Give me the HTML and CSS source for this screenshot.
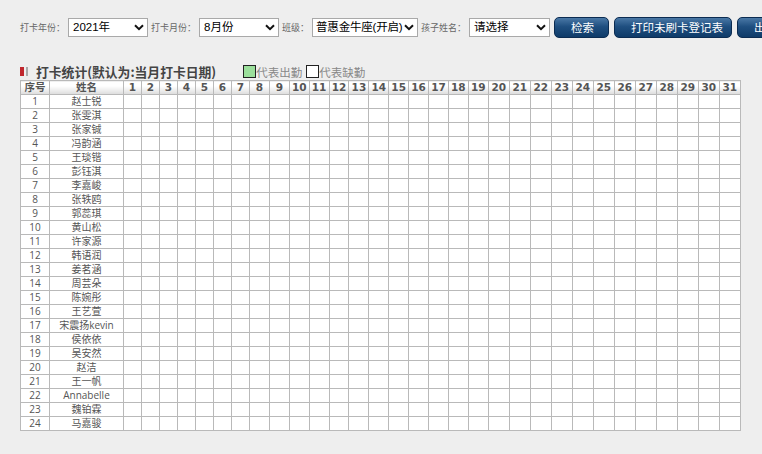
FILE: index.html
```html
<!DOCTYPE html>
<html>
<head>
<meta charset="utf-8">
<title>打卡统计</title>
<link rel="stylesheet" href="styles.css">
</head>
<body>
<div class="wrap">
  <div class="search">
    <span class="lbl">打卡年份：</span>
    <span class="sel w80"><select><option>2021年</option></select><svg viewBox="0 0 10 7"><path d="M1 1.2l4 4 4-4"/></svg></span>
    <span class="lbl">打卡月份：</span>
    <span class="sel w80"><select><option>8月份</option></select><svg viewBox="0 0 10 7"><path d="M1 1.2l4 4 4-4"/></svg></span>
    <span class="lbl">班级：</span>
    <span class="sel w106"><select><option>普惠金牛座(开启)</option></select><svg viewBox="0 0 10 7"><path d="M1 1.2l4 4 4-4"/></svg></span>
    <span class="lbl">孩子姓名：</span>
    <span class="sel w81"><select><option>请选择</option></select><svg viewBox="0 0 10 7"><path d="M1 1.2l4 4 4-4"/></svg></span>
    <button class="btn first">检索</button>
    <button class="btn wide">打印未刷卡登记表</button>
    <button class="btn">出勤统计导出</button>
  </div>

  <div class="title">
    <span class="mark"></span>
    <h2>打卡统计(默认为:当月打卡日期)</h2>
    <span class="legend"><i class="box on"></i>代表出勤<i class="box"></i>代表缺勤</span>
  </div>

  <table class="grid">
    <colgroup>
      <col style="width:29px"><col style="width:74px">
      <col class="d7" span="7"><col class="d8" span="12"><col class="d20" span="12">
    </colgroup>
    <tr><th>序号</th><th>姓名</th><th>1</th><th>2</th><th>3</th><th>4</th><th>5</th><th>6</th><th>7</th><th>8</th><th>9</th><th>10</th><th>11</th><th>12</th><th>13</th><th>14</th><th>15</th><th>16</th><th>17</th><th>18</th><th>19</th><th>20</th><th>21</th><th>22</th><th>23</th><th>24</th><th>25</th><th>26</th><th>27</th><th>28</th><th>29</th><th>30</th><th>31</th></tr>
    <tr><td>1</td><td>赵士锐</td><td></td><td></td><td></td><td></td><td></td><td></td><td></td><td></td><td></td><td></td><td></td><td></td><td></td><td></td><td></td><td></td><td></td><td></td><td></td><td></td><td></td><td></td><td></td><td></td><td></td><td></td><td></td><td></td><td></td><td></td><td></td></tr>
    <tr><td>2</td><td>张雯淇</td><td></td><td></td><td></td><td></td><td></td><td></td><td></td><td></td><td></td><td></td><td></td><td></td><td></td><td></td><td></td><td></td><td></td><td></td><td></td><td></td><td></td><td></td><td></td><td></td><td></td><td></td><td></td><td></td><td></td><td></td><td></td></tr>
    <tr><td>3</td><td>张家铖</td><td></td><td></td><td></td><td></td><td></td><td></td><td></td><td></td><td></td><td></td><td></td><td></td><td></td><td></td><td></td><td></td><td></td><td></td><td></td><td></td><td></td><td></td><td></td><td></td><td></td><td></td><td></td><td></td><td></td><td></td><td></td></tr>
    <tr><td>4</td><td>冯韵涵</td><td></td><td></td><td></td><td></td><td></td><td></td><td></td><td></td><td></td><td></td><td></td><td></td><td></td><td></td><td></td><td></td><td></td><td></td><td></td><td></td><td></td><td></td><td></td><td></td><td></td><td></td><td></td><td></td><td></td><td></td><td></td></tr>
    <tr><td>5</td><td>王琰锴</td><td></td><td></td><td></td><td></td><td></td><td></td><td></td><td></td><td></td><td></td><td></td><td></td><td></td><td></td><td></td><td></td><td></td><td></td><td></td><td></td><td></td><td></td><td></td><td></td><td></td><td></td><td></td><td></td><td></td><td></td><td></td></tr>
    <tr><td>6</td><td>彭钰淇</td><td></td><td></td><td></td><td></td><td></td><td></td><td></td><td></td><td></td><td></td><td></td><td></td><td></td><td></td><td></td><td></td><td></td><td></td><td></td><td></td><td></td><td></td><td></td><td></td><td></td><td></td><td></td><td></td><td></td><td></td><td></td></tr>
    <tr><td>7</td><td>李嘉峻</td><td></td><td></td><td></td><td></td><td></td><td></td><td></td><td></td><td></td><td></td><td></td><td></td><td></td><td></td><td></td><td></td><td></td><td></td><td></td><td></td><td></td><td></td><td></td><td></td><td></td><td></td><td></td><td></td><td></td><td></td><td></td></tr>
    <tr><td>8</td><td>张轶鸥</td><td></td><td></td><td></td><td></td><td></td><td></td><td></td><td></td><td></td><td></td><td></td><td></td><td></td><td></td><td></td><td></td><td></td><td></td><td></td><td></td><td></td><td></td><td></td><td></td><td></td><td></td><td></td><td></td><td></td><td></td><td></td></tr>
    <tr><td>9</td><td>郭蕊琪</td><td></td><td></td><td></td><td></td><td></td><td></td><td></td><td></td><td></td><td></td><td></td><td></td><td></td><td></td><td></td><td></td><td></td><td></td><td></td><td></td><td></td><td></td><td></td><td></td><td></td><td></td><td></td><td></td><td></td><td></td><td></td></tr>
    <tr><td>10</td><td>黄山松</td><td></td><td></td><td></td><td></td><td></td><td></td><td></td><td></td><td></td><td></td><td></td><td></td><td></td><td></td><td></td><td></td><td></td><td></td><td></td><td></td><td></td><td></td><td></td><td></td><td></td><td></td><td></td><td></td><td></td><td></td><td></td></tr>
    <tr><td>11</td><td>许家源</td><td></td><td></td><td></td><td></td><td></td><td></td><td></td><td></td><td></td><td></td><td></td><td></td><td></td><td></td><td></td><td></td><td></td><td></td><td></td><td></td><td></td><td></td><td></td><td></td><td></td><td></td><td></td><td></td><td></td><td></td><td></td></tr>
    <tr><td>12</td><td>韩语润</td><td></td><td></td><td></td><td></td><td></td><td></td><td></td><td></td><td></td><td></td><td></td><td></td><td></td><td></td><td></td><td></td><td></td><td></td><td></td><td></td><td></td><td></td><td></td><td></td><td></td><td></td><td></td><td></td><td></td><td></td><td></td></tr>
    <tr><td>13</td><td>姜茗涵</td><td></td><td></td><td></td><td></td><td></td><td></td><td></td><td></td><td></td><td></td><td></td><td></td><td></td><td></td><td></td><td></td><td></td><td></td><td></td><td></td><td></td><td></td><td></td><td></td><td></td><td></td><td></td><td></td><td></td><td></td><td></td></tr>
    <tr><td>14</td><td>周芸朵</td><td></td><td></td><td></td><td></td><td></td><td></td><td></td><td></td><td></td><td></td><td></td><td></td><td></td><td></td><td></td><td></td><td></td><td></td><td></td><td></td><td></td><td></td><td></td><td></td><td></td><td></td><td></td><td></td><td></td><td></td><td></td></tr>
    <tr><td>15</td><td>陈婉彤</td><td></td><td></td><td></td><td></td><td></td><td></td><td></td><td></td><td></td><td></td><td></td><td></td><td></td><td></td><td></td><td></td><td></td><td></td><td></td><td></td><td></td><td></td><td></td><td></td><td></td><td></td><td></td><td></td><td></td><td></td><td></td></tr>
    <tr><td>16</td><td>王艺萱</td><td></td><td></td><td></td><td></td><td></td><td></td><td></td><td></td><td></td><td></td><td></td><td></td><td></td><td></td><td></td><td></td><td></td><td></td><td></td><td></td><td></td><td></td><td></td><td></td><td></td><td></td><td></td><td></td><td></td><td></td><td></td></tr>
    <tr><td>17</td><td>宋震扬kevin</td><td></td><td></td><td></td><td></td><td></td><td></td><td></td><td></td><td></td><td></td><td></td><td></td><td></td><td></td><td></td><td></td><td></td><td></td><td></td><td></td><td></td><td></td><td></td><td></td><td></td><td></td><td></td><td></td><td></td><td></td><td></td></tr>
    <tr><td>18</td><td>侯依依</td><td></td><td></td><td></td><td></td><td></td><td></td><td></td><td></td><td></td><td></td><td></td><td></td><td></td><td></td><td></td><td></td><td></td><td></td><td></td><td></td><td></td><td></td><td></td><td></td><td></td><td></td><td></td><td></td><td></td><td></td><td></td></tr>
    <tr><td>19</td><td>吴安然</td><td></td><td></td><td></td><td></td><td></td><td></td><td></td><td></td><td></td><td></td><td></td><td></td><td></td><td></td><td></td><td></td><td></td><td></td><td></td><td></td><td></td><td></td><td></td><td></td><td></td><td></td><td></td><td></td><td></td><td></td><td></td></tr>
    <tr><td>20</td><td>赵洁</td><td></td><td></td><td></td><td></td><td></td><td></td><td></td><td></td><td></td><td></td><td></td><td></td><td></td><td></td><td></td><td></td><td></td><td></td><td></td><td></td><td></td><td></td><td></td><td></td><td></td><td></td><td></td><td></td><td></td><td></td><td></td></tr>
    <tr><td>21</td><td>王一帆</td><td></td><td></td><td></td><td></td><td></td><td></td><td></td><td></td><td></td><td></td><td></td><td></td><td></td><td></td><td></td><td></td><td></td><td></td><td></td><td></td><td></td><td></td><td></td><td></td><td></td><td></td><td></td><td></td><td></td><td></td><td></td></tr>
    <tr><td>22</td><td>Annabelle</td><td></td><td></td><td></td><td></td><td></td><td></td><td></td><td></td><td></td><td></td><td></td><td></td><td></td><td></td><td></td><td></td><td></td><td></td><td></td><td></td><td></td><td></td><td></td><td></td><td></td><td></td><td></td><td></td><td></td><td></td><td></td></tr>
    <tr><td>23</td><td>魏铂霖</td><td></td><td></td><td></td><td></td><td></td><td></td><td></td><td></td><td></td><td></td><td></td><td></td><td></td><td></td><td></td><td></td><td></td><td></td><td></td><td></td><td></td><td></td><td></td><td></td><td></td><td></td><td></td><td></td><td></td><td></td><td></td></tr>
    <tr><td>24</td><td>马嘉骏</td><td></td><td></td><td></td><td></td><td></td><td></td><td></td><td></td><td></td><td></td><td></td><td></td><td></td><td></td><td></td><td></td><td></td><td></td><td></td><td></td><td></td><td></td><td></td><td></td><td></td><td></td><td></td><td></td><td></td><td></td><td></td></tr>
  </table>
</div>
</body>
</html>
```

FILE: styles.css
```css
body{
   margin: 0;
   background: #eeeeee;
   font-family: "Open Sans", "Noto Sans CJK SC", sans-serif;
   overflow: hidden;
}
.wrap{
   padding: 17px 0 0 20px;
}

/* search bar */
.search{
   display: flex;
   align-items: center;
   gap: 3px;
   white-space: nowrap;
   height: 20px;
}
.lbl{
   font-size: 9px;
   color: #666;
   font-family: "Noto Sans CJK SC", sans-serif;
}
.sel{
   position: relative;
   display: inline-block;
   flex: none;
}
.sel select{
   -webkit-appearance: none;
   appearance: none;
   width: 100%;
   height: 19px;
   border: 1px solid #a9a9a9;
   border-radius: 0;
   background: #fff;
   color: #000;
   font: 11.5px "Liberation Sans", "Noto Sans CJK SC", sans-serif;
   padding: 0 14px 0 4px;
   display: block;
}
.sel svg{
   position: absolute;
   right: 4px;
   top: 6px;
   width: 10px;
   height: 7px;
   pointer-events: none;
   fill: none;
   stroke: #111;
   stroke-width: 2;
}
.w80{ width: 80px; }
.w81{ width: 81px; }
.w106{ width: 106px; }
.w106 select{ padding-left: 3px; letter-spacing: -0.2px; }

.btn{
   flex: none;
   height: 21px;
   padding: 0 16px;
   margin-left: 2px;
   border: 1px solid #0b2c52;
   border-radius: 5px;
   background: linear-gradient(#4a78a6, #1f4f80 45%, #0f3b69);
   color: #fff;
   font: 11.5px "Noto Sans CJK SC", sans-serif;
   line-height: 19px;
}
.btn.first{ width: 55px; margin-left: 1px; }
.btn.wide{ width: 118px; }

/* title row */
.title{
   display: flex;
   align-items: center;
   margin-top: 26px;
   height: 17px;
}
.mark{
   width: 4px;
   height: 9px;
   padding-right: 2px;
   border-right: 2px solid #a9a9a9;
   background: #c0272d;
   background-clip: content-box;
}
.title h2{
   margin: 0 0 0 8px;
   font: bold 12.8px "Noto Sans CJK SC", sans-serif;
   color: #444;
}
.legend{
   display: flex;
   align-items: center;
   margin-left: 27px;
   font: 11.5px "Noto Sans CJK SC", sans-serif;
   color: #888;
}
.box{
   width: 11px;
   height: 11px;
   border: 1px solid #222;
   background: #fff;
   margin-left: 4px;
}
.box.on{
   background: #9bdf9b;
   margin-left: 0;
}

/* table */
.grid{
   border-collapse: collapse;
   table-layout: fixed;
   width: 720px;
   background: #fff;
}
.d7{ width: 18px; }
.d8{ width: 19.9px; }
.d20{ width: 21px; }
.grid td, .grid th{
   border: 1px solid #b9b9b9;
   height: 13px;
   padding: 0;
   text-align: center;
   font-size: 10px;
   line-height: 13px;
   color: #555;
   white-space: nowrap;
   overflow: hidden;
}
.grid th{
   font: bold 10.5px "DejaVu Sans", "Noto Sans CJK SC", sans-serif;
   line-height: 13px;
   color: #555;
   background: linear-gradient(#fff 35%, #dcdcdc);
}
```
